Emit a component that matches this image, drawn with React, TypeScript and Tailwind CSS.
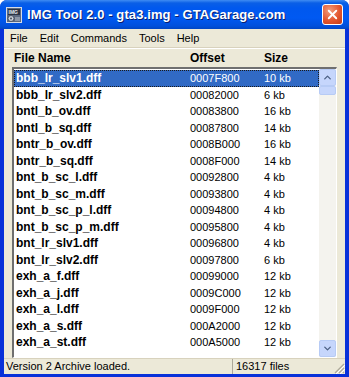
import { ChevronDown, ChevronUp, X } from "lucide-react";

type Entry = {
  name: string;
  offset: string;
  size: string;
};

const entries: Entry[] = [
  { name: "bbb_lr_slv1.dff", offset: "0007F800", size: "10 kb" },
  { name: "bbb_lr_slv2.dff", offset: "00082000", size: "6 kb" },
  { name: "bntl_b_ov.dff", offset: "00083800", size: "16 kb" },
  { name: "bntl_b_sq.dff", offset: "00087800", size: "14 kb" },
  { name: "bntr_b_ov.dff", offset: "0008B000", size: "16 kb" },
  { name: "bntr_b_sq.dff", offset: "0008F000", size: "14 kb" },
  { name: "bnt_b_sc_l.dff", offset: "00092800", size: "4 kb" },
  { name: "bnt_b_sc_m.dff", offset: "00093800", size: "4 kb" },
  { name: "bnt_b_sc_p_l.dff", offset: "00094800", size: "4 kb" },
  { name: "bnt_b_sc_p_m.dff", offset: "00095800", size: "4 kb" },
  { name: "bnt_lr_slv1.dff", offset: "00096800", size: "4 kb" },
  { name: "bnt_lr_slv2.dff", offset: "00097800", size: "6 kb" },
  { name: "exh_a_f.dff", offset: "00099000", size: "12 kb" },
  { name: "exh_a_j.dff", offset: "0009C000", size: "12 kb" },
  { name: "exh_a_l.dff", offset: "0009F000", size: "12 kb" },
  { name: "exh_a_s.dff", offset: "000A2000", size: "12 kb" },
  { name: "exh_a_st.dff", offset: "000A5000", size: "12 kb" },
];

const menus = ["File", "Edit", "Commands", "Tools", "Help"];

function AppIcon() {
  return (
    <svg width="16" height="16" viewBox="0 0 16 16">
      <rect x="0.5" y="0.5" width="15" height="15" fill="#5c6a80" stroke="#d6dce6" />
      <rect x="2" y="2" width="12" height="6" fill="#2c3444" />
      <text x="2.5" y="7" fontSize="5" fill="#e8ecf2" fontFamily="Liberation Sans, sans-serif" fontWeight="bold">
        IMG
      </text>
      <circle cx="5" cy="11.5" r="3" fill="#c9cfd8" stroke="#39414f" strokeWidth="0.8" />
      <circle cx="5" cy="11.5" r="0.9" fill="#39414f" />
      <rect x="9" y="10" width="5" height="4" fill="#8d97a6" />
    </svg>
  );
}

export default function App() {
  return (
    <div
      className="flex h-[377px] w-[349px] flex-col overflow-hidden rounded-t-[7px] bg-[#0831d9] text-black"
      style={{ fontFamily: "Tahoma, 'Liberation Sans', Arial, sans-serif" }}
    >
      <div className="flex h-[29px] shrink-0 items-center bg-[linear-gradient(to_bottom,#3f8cf3_0px,#0a5fe6_3px,#0058ee_8px,#0059f2_18px,#0050dc_26px,#0046c3_29px)] pl-[6px] pr-[6px]">
        <AppIcon />
        <span className="ml-[5px] flex-1 text-[13px] font-bold tracking-[0.1px] text-white [text-shadow:1px_1px_0_#0a1f6e]">
          IMG Tool 2.0 - gta3.img - GTAGarage.com
        </span>
        <div className="flex h-[21px] w-[21px] items-center justify-center rounded-[3px] border border-white bg-[radial-gradient(circle_at_35%_30%,#f29d7d,#e3562f_55%,#c23b16)]">
          <X size={15} strokeWidth={3} color="white" />
        </div>
      </div>

      <div className="mx-[4px] mb-[4px] flex flex-1 flex-col bg-[#ece9d8] text-[11px]">
        <div className="flex h-[19px] shrink-0 items-center border-b border-[#d8d2bd] pl-[5px]">
          {menus.map((m) => (
            <span key={m} className="px-[6px] first:pl-[1px]">
              {m}
            </span>
          ))}
        </div>
        <div className="h-px bg-white" />

        <div className="flex h-[18px] shrink-0 items-center pl-[10px] text-[12px] font-bold">
          <span className="w-[176px]">File Name</span>
          <span className="w-[74px]">Offset</span>
          <span>Size</span>
        </div>

        <div className="mx-[8px] flex h-[291px] shrink-0 border-b border-l-2 border-r border-t-2 border-b-white border-l-[#6f6f6f] border-r-white border-t-[#6f6f6f] bg-white">
          <div className="flex-1 pt-px">
            {entries.map((e, i) => {
              const selected = i === 0;
              return (
                <div
                  key={e.name}
                  className={
                    selected
                      ? "flex h-[16.5px] items-center border border-dotted border-[#1a1a1a] bg-[#316ac5] text-white"
                      : "flex h-[16.5px] items-center border border-transparent"
                  }
                >
                  <span className="w-[175px] pl-px text-[12px] font-bold">{e.name}</span>
                  <span className="w-[74px] text-[11px]">{e.offset}</span>
                  <span className="text-[11px]">{e.size}</span>
                </div>
              );
            })}
          </div>
          <div className="flex w-[17px] flex-col bg-[#f4f3ee]">
            <div className="flex h-[17px] items-center justify-center rounded-[2px] border border-[#b7cbf5] bg-[#c6d6fc]">
              <ChevronUp size={11} strokeWidth={3} color="#4d6185" />
            </div>
            <div className="h-[9px] rounded-[2px] border border-[#b7cbf5] bg-[#c6d6fc]" />
            <div className="flex-1" />
            <div className="flex h-[17px] items-center justify-center rounded-[2px] border border-[#b7cbf5] bg-[#c6d6fc]">
              <ChevronDown size={11} strokeWidth={3} color="#4d6185" />
            </div>
          </div>
        </div>

        <div className="mt-auto flex h-[16px] items-center border-t border-[#d8d2bd] text-[11px]">
          <span className="w-[228px] pl-[2px]">Version 2 Archive loaded.</span>
          <div className="h-full w-px bg-[#aca899]" />
          <span className="flex-1 pl-[3px]">16317 files</span>
          <svg width="12" height="12" viewBox="0 0 12 12" className="self-end">
            <path d="M11 2 L2 11 M11 6 L6 11 M11 10 L10 11" stroke="#aca899" strokeWidth="1.2" />
            <path d="M12 3 L3 12 M12 7 L7 12" stroke="#ffffff" strokeWidth="1" />
          </svg>
        </div>
      </div>
    </div>
  );
}
